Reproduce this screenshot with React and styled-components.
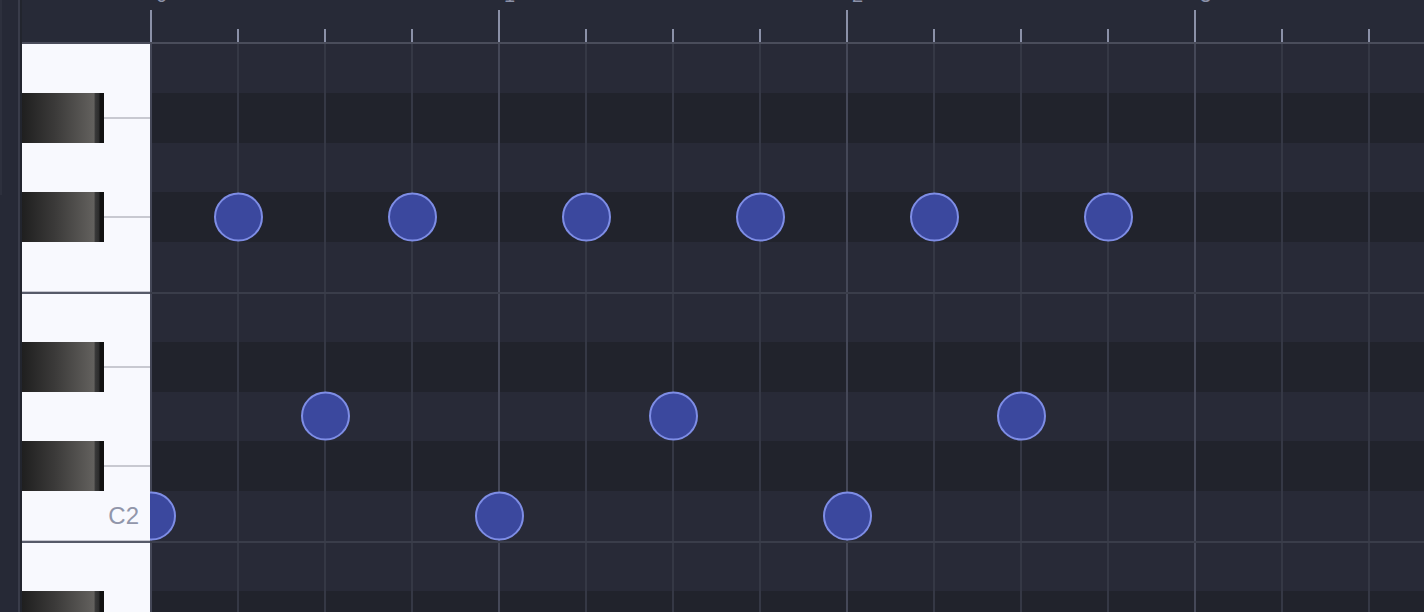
import styled, { createGlobalStyle, css } from "styled-components";

const ROW_H = 49.8;
const STEP = 87;
const BAR = STEP * 4;

// split marks a white key that sits straight under another white key (E/F, B/C)
const rows = [
  { name: "A2" },
  { name: "G#2", black: true },
  { name: "G2" },
  { name: "F#2", black: true },
  { name: "F2" },
  { name: "E2", split: true },
  { name: "D#2", black: true },
  { name: "D2" },
  { name: "C#2", black: true },
  { name: "C2", label: true },
  { name: "B1", split: true },
  { name: "A#1", black: true },
];

// steps (eighths) where each pitch is hit
const notes = {
  "F#2": [1, 3, 5, 7, 9, 11],
  D2: [2, 6, 10],
  C2: [0, 4, 8],
};

const bars = [0, 1, 2, 3];

const GlobalStyle = createGlobalStyle`
  html, body {
    margin: 0;
    padding: 0;
    background: #262936;
    overflow: hidden;
  }
  #root {
    height: 100vh;
  }
`;

const Frame = styled.div`
  display: flex;
  width: 100vw;
  height: 100vh;
  background: #262936;
  font-family: "Liberation Sans", Arial, sans-serif;
`;

const SideStrip = styled.div`
  width: 18px;
  flex: none;
  background: #262936;
  border-right: 2px solid #393c4a;
`;

const Thumb = styled.div`
  width: 2px;
  height: 195px;
  background: #2d303d;
`;

const Editor = styled.div`
  flex: 1;
  min-width: 0;
  display: flex;
  flex-direction: column;
  border-left: 2px solid #22252e;
`;

const Ruler = styled.div`
  height: 42px;
  flex: none;
  display: flex;
  background: #272a37;
  border-bottom: 2px solid #4a4d5b;
  position: relative;
  z-index: 1;
`;

const RulerCorner = styled.div`
  width: 128px;
  flex: none;
`;

const RulerTicks = styled.div`
  flex: 1;
  position: relative;
  background-image:
    repeating-linear-gradient(to right, #8b91a8 0 2px, transparent 2px ${BAR}px),
    repeating-linear-gradient(to right, #8b91a8 0 2px, transparent 2px ${STEP}px);
  background-size: 100% 32px, 100% 13px;
  background-position: left bottom, left bottom;
  background-repeat: no-repeat;
`;

const BarLabel = styled.span`
  position: absolute;
  top: -15px;
  font-size: 20px;
  line-height: 20px;
  color: #8b91a8;
`;

const Body = styled.div`
  flex: 1;
  min-height: 0;
  display: flex;
  overflow: hidden;
`;

const Piano = styled.div`
  width: 128px;
  flex: none;
  overflow: hidden;
  background: #f8f9fe;
`;

const Grid = styled.div`
  flex: 1;
  min-width: 0;
  overflow: hidden;
  position: relative;
`;

const Track = styled.div`
  display: flex;
  flex-direction: column;
  margin-top: -1px;
`;

const KeyRow = styled.div`
  height: ${ROW_H}px;
  flex: none;
  box-sizing: border-box;
  display: flex;
  background: #f8f9fe;
  ${(p) =>
    p.$split &&
    css`
      border-top: 2px solid #565a69;
      box-shadow: 0 -1px 0 #c6c7d0;
    `}
`;

const BlackKey = styled.div`
  width: 82px;
  flex: none;
  background: linear-gradient(
    to right,
    #1f1f1f 0%,
    #3b3a39 40%,
    #63615e 88%,
    #3a3a3a 89%,
    #2c2c2c 94%,
    #121212 95%,
    #121212 100%
  );
`;

const KeyRest = styled.div`
  flex: 1;
  display: flex;
  align-items: center;
`;

const KeySeam = styled.div`
  flex: 1;
  height: 2px;
  background: #c8c9d1;
`;

const KeyLabel = styled.span`
  flex: 1;
  text-align: right;
  padding-right: 11px;
  font-size: 24px;
  color: #9196aa;
`;

const GridRow = styled.div`
  height: ${ROW_H}px;
  flex: none;
  box-sizing: border-box;
  position: relative;
  background-color: ${(p) => (p.$black ? "#21232c" : "#282a37")};
  background-image:
    repeating-linear-gradient(to right, #454858 0 2px, transparent 2px ${BAR}px),
    repeating-linear-gradient(to right, #353845 0 2px, transparent 2px ${STEP}px);
  ${(p) =>
    p.$split &&
    css`
      border-top: 2px solid #3a3d4a;
    `}
`;

const Note = styled.div`
  position: absolute;
  top: 50%;
  width: 49px;
  height: 49px;
  box-sizing: border-box;
  border-radius: 50%;
  background: #3b489e;
  border: 2px solid #7e8de5;
  transform: translateY(-50%);
`;

function PianoKey({ row }) {
  return (
    <KeyRow $split={row.split}>
      {row.black ? (
        <>
          <BlackKey />
          <KeyRest>
            <KeySeam />
          </KeyRest>
        </>
      ) : (
        <KeyRest>{row.label && <KeyLabel>{row.name}</KeyLabel>}</KeyRest>
      )}
    </KeyRow>
  );
}

export default function App() {
  return (
    <>
      <GlobalStyle />
      <Frame>
        <SideStrip>
          <Thumb />
        </SideStrip>
        <Editor>
          <Ruler>
            <RulerCorner />
            <RulerTicks>
              {bars.map((b) => (
                <BarLabel key={b} style={{ left: b * BAR + 6 }}>
                  {b}
                </BarLabel>
              ))}
            </RulerTicks>
          </Ruler>
          <Body>
            <Piano>
              <Track>
                {rows.map((r) => (
                  <PianoKey key={r.name} row={r} />
                ))}
              </Track>
            </Piano>
            <Grid>
              <Track>
                {rows.map((r) => (
                  <GridRow key={r.name} $black={r.black} $split={r.split}>
                    {(notes[r.name] || []).map((s) => (
                      <Note key={s} style={{ left: s * STEP + 1 - 24.5 }} />
                    ))}
                  </GridRow>
                ))}
              </Track>
            </Grid>
          </Body>
        </Editor>
      </Frame>
    </>
  );
}
